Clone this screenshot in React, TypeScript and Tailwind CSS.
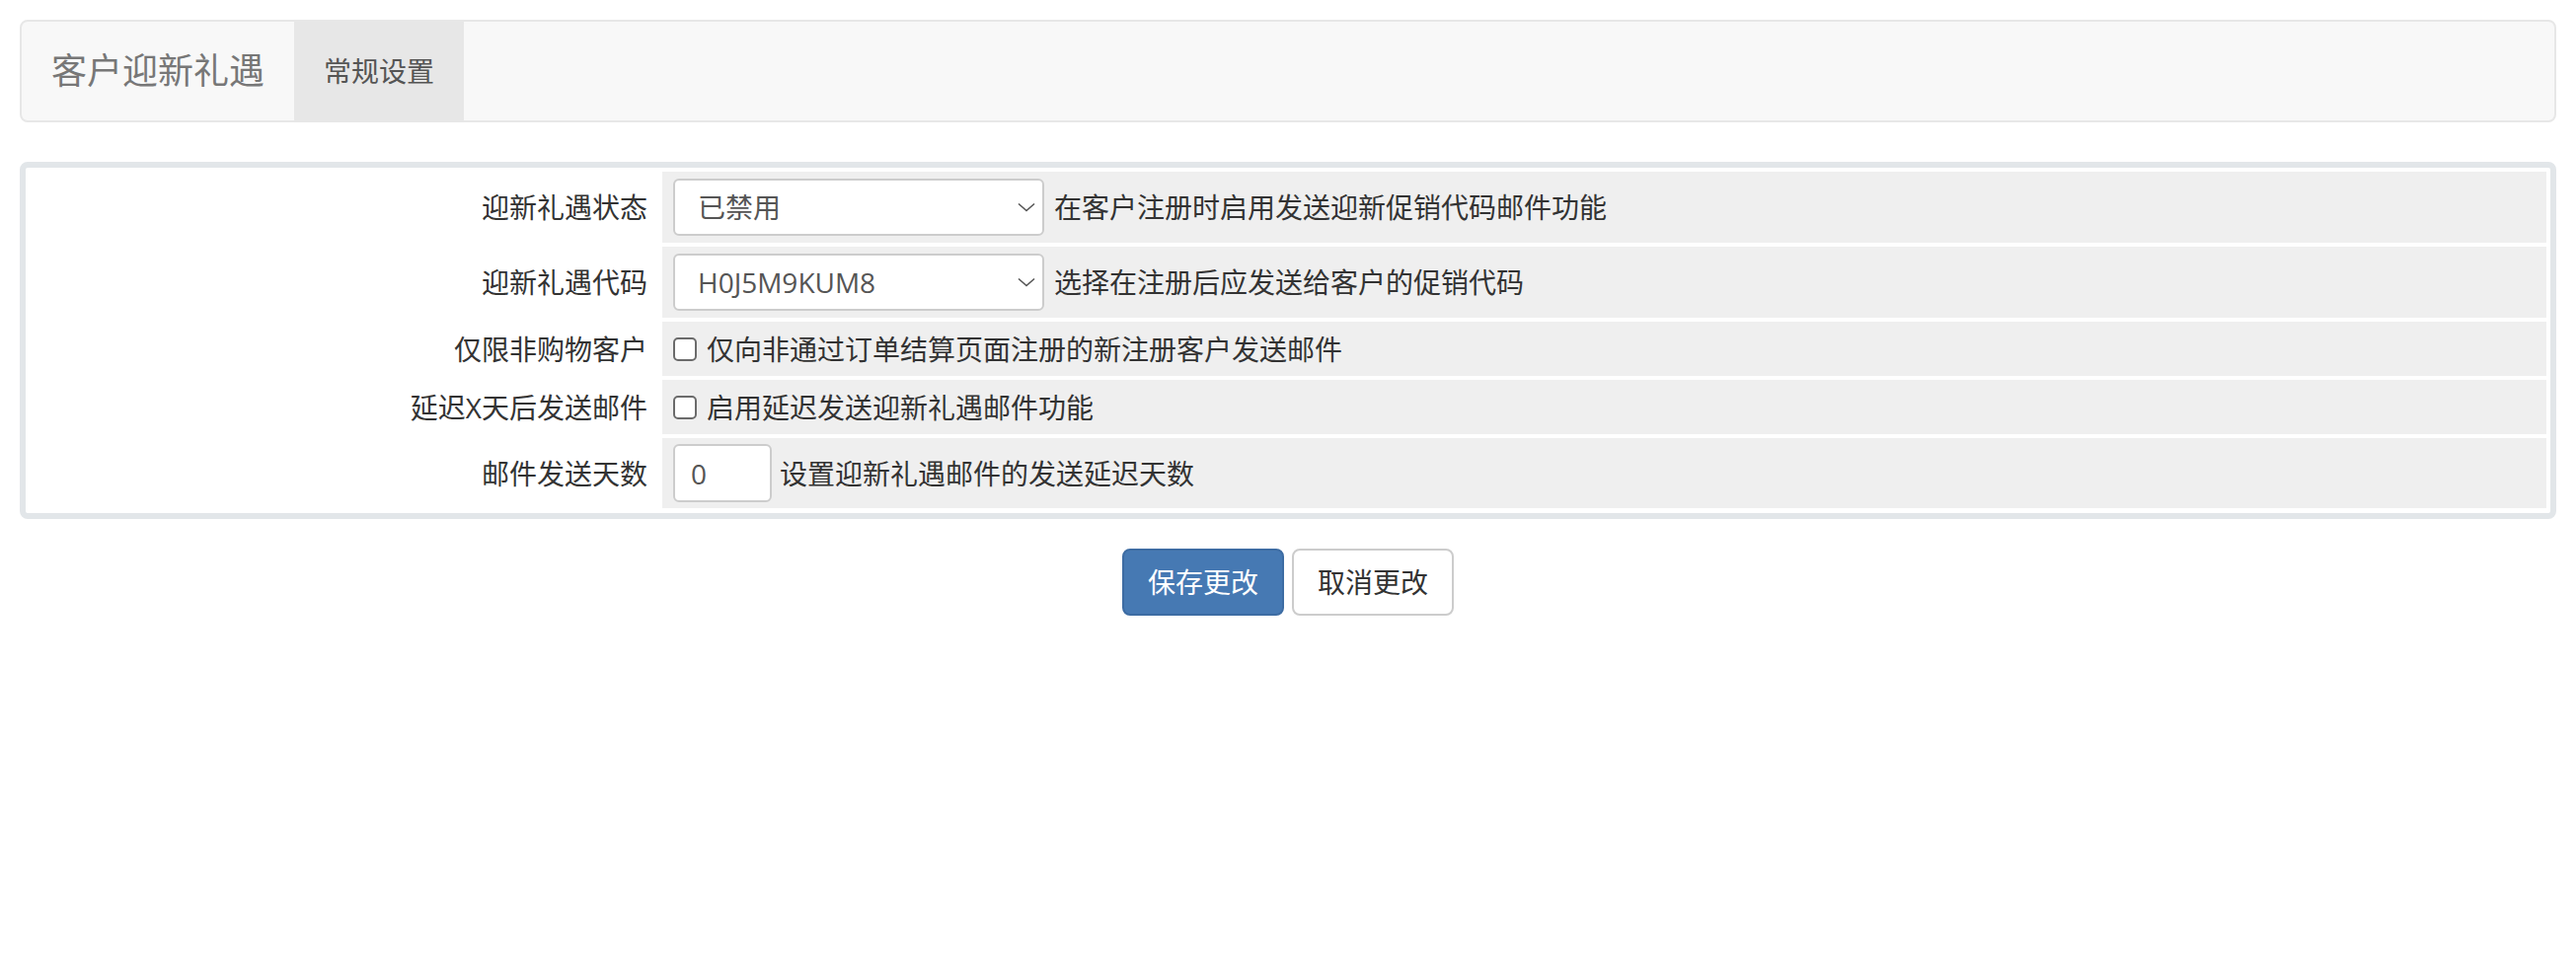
import React from 'react';

const FONT = "font-['Open_Sans','Noto_Sans_CJK_SC',sans-serif]";

const Chevron = () => (
  <svg width="18" height="10" viewBox="0 0 18 10" fill="none" className="shrink-0">
    <path d="M1 1.5 L9 8.5 L17 1.5" stroke="#555" strokeWidth="1.6" />
  </svg>
);

const FakeSelect = ({ value }: { value: string }) => (
  <div className="w-[376px] h-[58px] bg-white border-2 border-[#cccccc] rounded-[6px] flex items-center justify-between pl-[23px] pr-[7px] text-[#555] shrink-0">
    <span>{value}</span>
    <Chevron />
  </div>
);

const Row = ({ label, height, children }: { label: string; height: string; children: React.ReactNode }) => (
  <div className={`flex gap-[4px] ${height}`}>
    <div className="w-[637px] shrink-0 bg-white flex items-center justify-end pr-[11px] text-[#333]">{label}</div>
    <div className="flex-1 bg-[#efefef] flex items-center pl-[11px] text-[#333]">{children}</div>
  </div>
);

// plain unchecked checkbox, drawn as a box so its size is exact
const Check = ({ text }: { text: string }) => (
  <div className="flex items-center gap-[10px]">
    <span className="block shrink-0 w-[24px] h-[24px] bg-white border-2 border-[#6b6b6b] rounded-[5px]" />
    <span>{text}</span>
  </div>
);

export default function App() {
  return (
    <div className={`${FONT} bg-white min-h-[976px] px-[20px] pt-[20px] text-[28px] leading-[40px]`}>
      {/* top navbar */}
      <div className="h-[104px] bg-[#f8f8f8] border-2 border-[#e7e7e7] rounded-[8px] flex items-stretch">
        <div className="px-[30px] flex items-center text-[36px] text-[#777]">客户迎新礼遇</div>
        <div className="px-[30px] flex items-center bg-[#e7e7e7] text-[#555]">常规设置</div>
      </div>

      {/* settings table */}
      <div className="mt-[40px] border-[6px] border-[#e2e6e9] rounded-[8px] bg-white pt-[4px] px-[4px] pb-[5px] flex flex-col gap-[4px]">
        <Row label="迎新礼遇状态" height="h-[72px]">
          <FakeSelect value="已禁用" />
          <span className="ml-[10px]">在客户注册时启用发送迎新促销代码邮件功能</span>
        </Row>
        <Row label="迎新礼遇代码" height="h-[72px]">
          <FakeSelect value="H0J5M9KUM8" />
          <span className="ml-[10px]">选择在注册后应发送给客户的促销代码</span>
        </Row>
        <Row label="仅限非购物客户" height="h-[55px]">
          <Check text="仅向非通过订单结算页面注册的新注册客户发送邮件" />
        </Row>
        <Row label="延迟X天后发送邮件" height="h-[55px]">
          <Check text="启用延迟发送迎新礼遇邮件功能" />
        </Row>
        <Row label="邮件发送天数" height="h-[71px]">
          <div className="w-[100px] h-[59px] bg-white border-2 border-[#cccccc] rounded-[6px] flex items-center pl-[16px] text-[#555] shrink-0">0</div>
          <span className="ml-[8px]">设置迎新礼遇邮件的发送延迟天数</span>
        </Row>
      </div>

      {/* actions */}
      <div className="mt-[30px] flex justify-center gap-[8px]">
        <button className="h-[68px] px-[24px] bg-[#4679b3] border-2 border-[#3d6ca3] rounded-[8px] text-white">保存更改</button>
        <button className="h-[68px] px-[24px] bg-white border-2 border-[#cccccc] rounded-[8px] text-[#333]">取消更改</button>
      </div>
    </div>
  );
}
